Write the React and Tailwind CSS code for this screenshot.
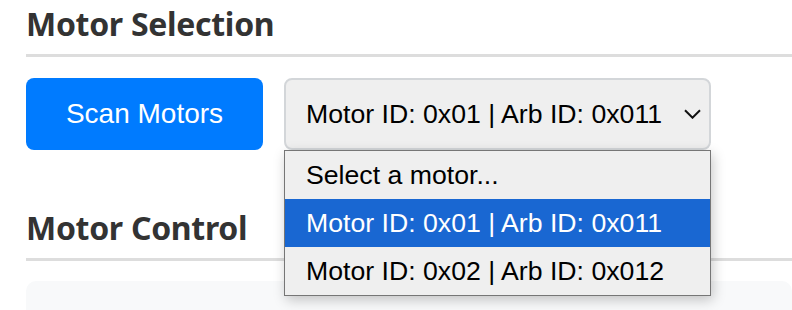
import React from 'react';

const options = [
  'Select a motor...',
  'Motor ID: 0x01 | Arb ID: 0x011',
  'Motor ID: 0x02 | Arb ID: 0x012',
];

const SectionTitle = ({ children }) => (
  <h2 className="text-[32px] leading-[38px] font-bold text-[#333] pb-[11px] border-b-[3px] border-[#dddddd] font-['Noto_Sans',sans-serif] tracking-[-0.3px]">
    {children}
  </h2>
);

export default function App() {
  const selected = 1;
  return (
    <div className="w-[792px] h-[310px] overflow-hidden bg-white pl-[26px] pt-[5px] font-['Liberation_Sans',Arial,sans-serif]">
      <SectionTitle>Motor Selection</SectionTitle>

      <div className="flex items-start gap-[21px] mt-[21px]">
        <button className="w-[237px] h-[72px] rounded-[8px] bg-[#007bff] text-white text-[28px]">
          Scan Motors
        </button>

        <div className="relative">
          <div className="w-[427px] h-[72px] rounded-[8px] bg-[#efefef] border-2 border-[#d3d6d9] flex items-center justify-between pl-[20px] pr-[7px] text-[26.67px] text-black">
            <span>{options[selected]}</span>
            <svg width="17" height="10" viewBox="0 0 17 10" fill="none" className="mr-[1px]">
              <path d="M1 1.2L8.5 8.7L16 1.2" stroke="#111" strokeWidth="2" />
            </svg>
          </div>

          <ul className="absolute left-0 top-[72px] z-10 w-[427px] bg-[#efefef] border border-[#767676] shadow-[2px_4px_12px_rgba(0,0,0,0.22)] text-[26.67px] text-black">
            {options.map((opt, i) => (
              <li
                key={opt}
                className={
                  i === selected
                    ? 'h-[48px] flex items-center pl-[21px] bg-[#1967d2] text-white'
                    : 'h-[48px] flex items-center pl-[21px]'
                }
              >
                {opt}
              </li>
            ))}
          </ul>
        </div>
      </div>

      <div className="mt-[59px]">
        <SectionTitle>Motor Control</SectionTitle>
      </div>

      <div className="mt-[20px] h-[60px] rounded-[10px] bg-[#f8f9fa]" />
    </div>
  );
}
